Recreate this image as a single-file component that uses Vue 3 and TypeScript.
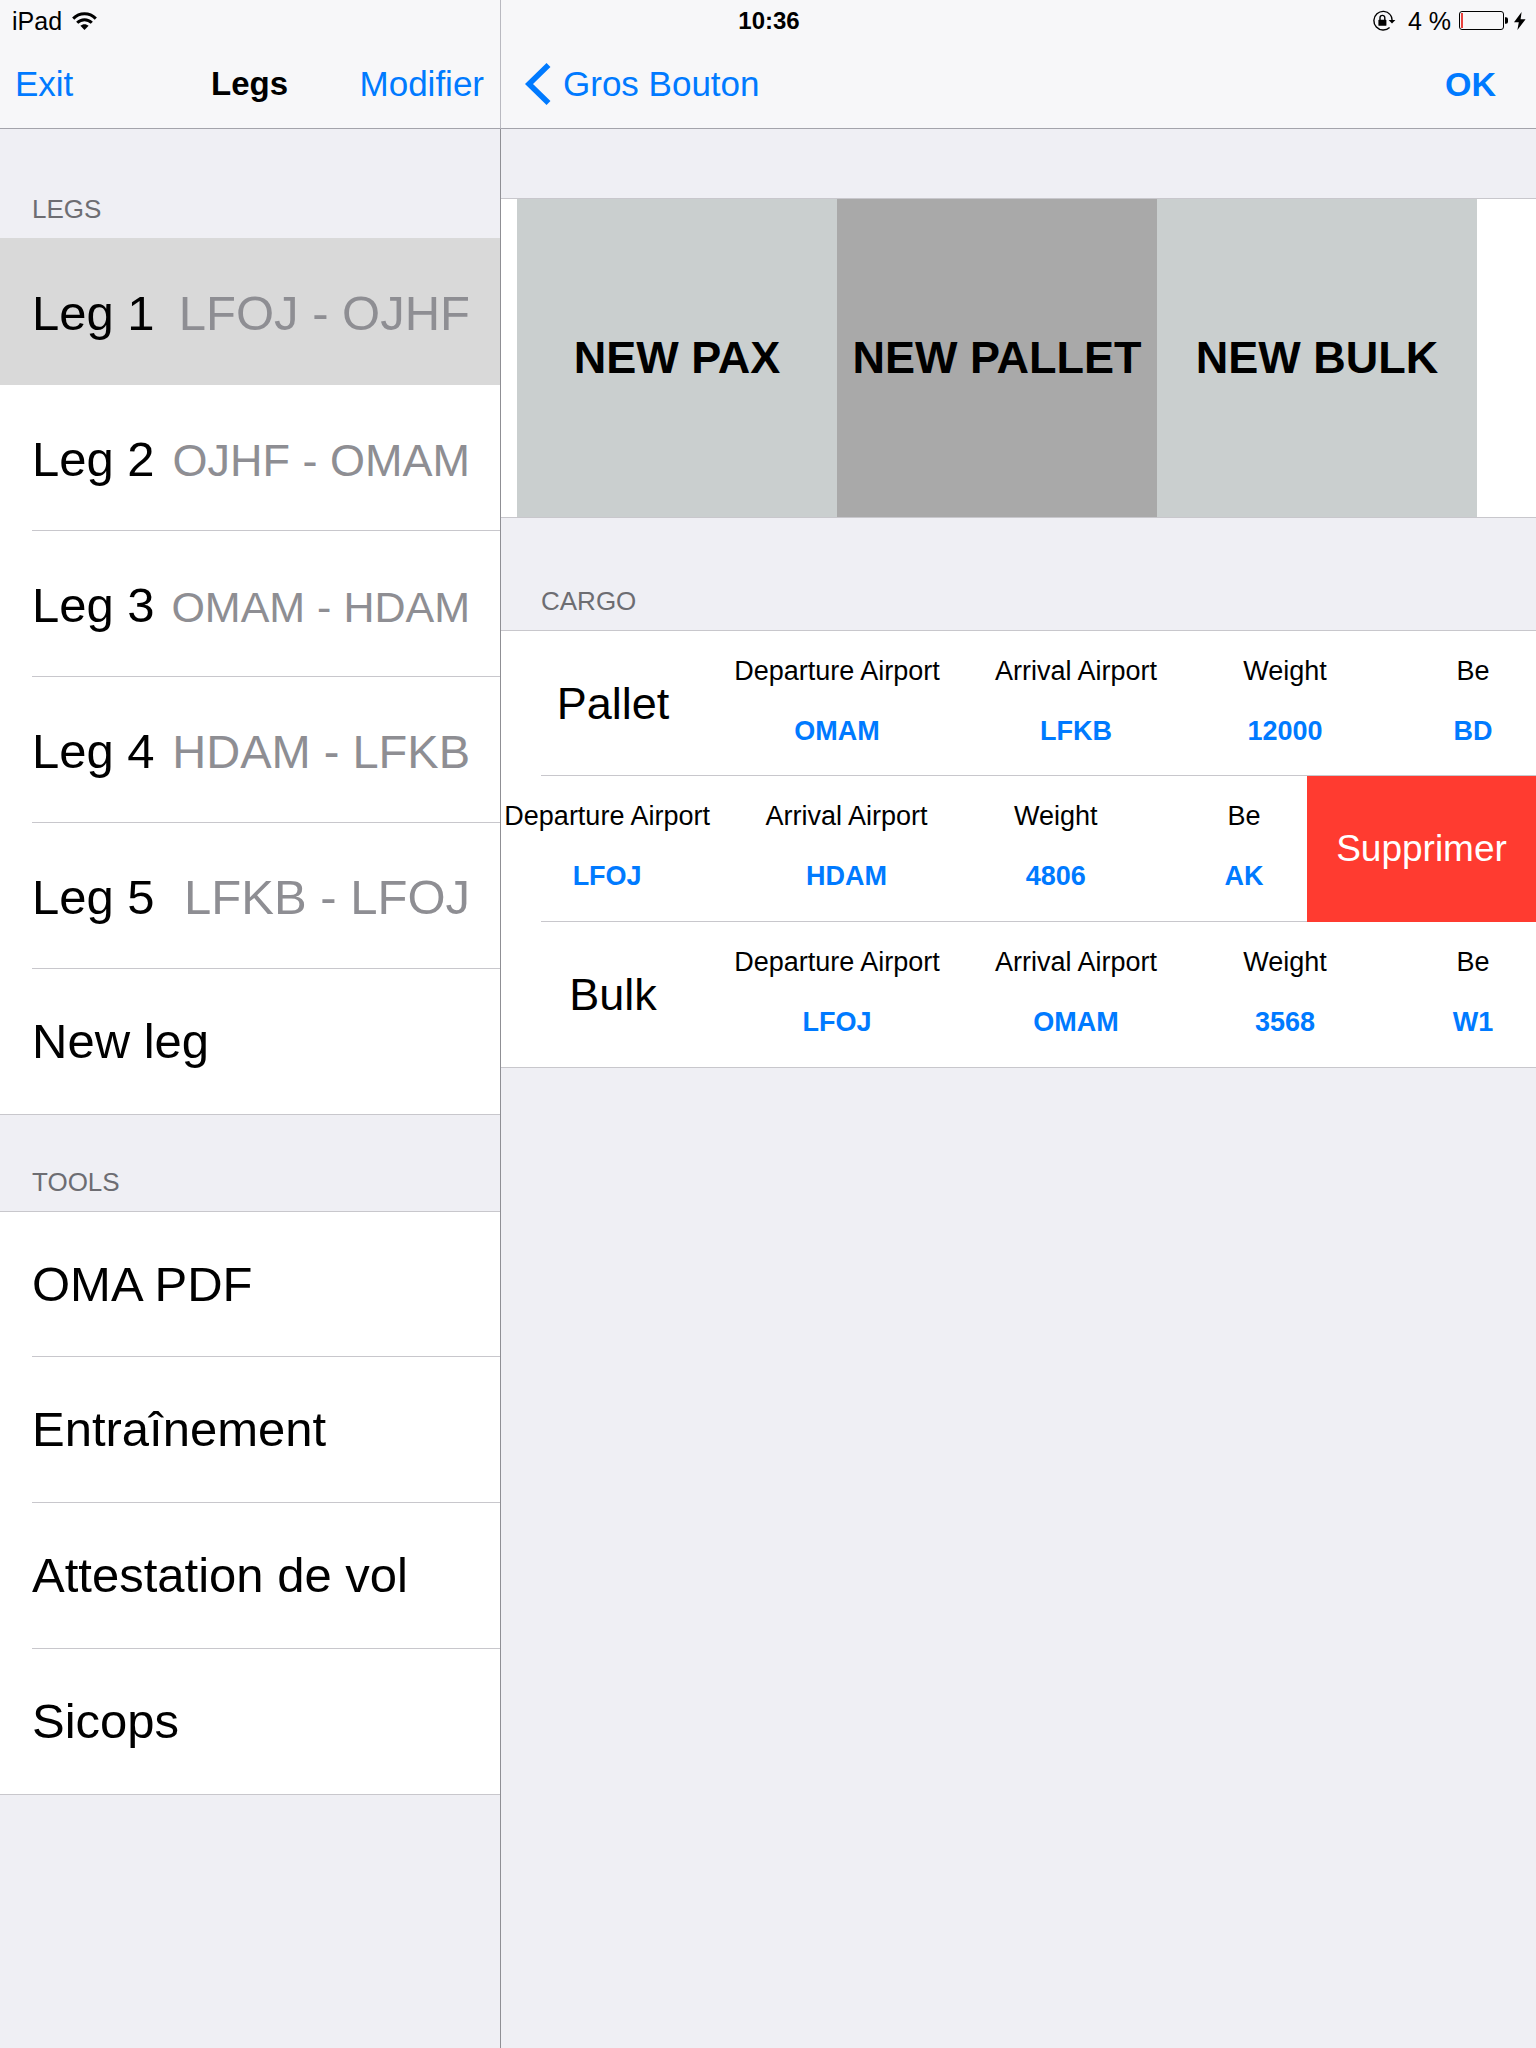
<script setup lang="ts">
import { ref } from 'vue'

interface Leg {
  name: string
  route: string
  size: number
}

interface CargoItem {
  kind: string
  fields: { label: string; value: string }[]
  swiped: boolean
}

const legs: Leg[] = [
  { name: 'Leg 1', route: 'LFOJ - OJHF', size: 49 },
  { name: 'Leg 2', route: 'OJHF - OMAM', size: 45 },
  { name: 'Leg 3', route: 'OMAM - HDAM', size: 43 },
  { name: 'Leg 4', route: 'HDAM - LFKB', size: 47 },
  { name: 'Leg 5', route: 'LFKB - LFOJ', size: 49 },
]

const tools: string[] = ['OMA PDF', 'Entraînement', 'Attestation de vol', 'Sicops']

const actions = ['NEW PAX', 'NEW PALLET', 'NEW BULK']

function cargoItem(kind: string, from: string, to: string, weight: string, be: string, swiped = false): CargoItem {
  return {
    kind,
    swiped,
    fields: [
      { label: 'Departure Airport', value: from },
      { label: 'Arrival Airport', value: to },
      { label: 'Weight', value: weight },
      { label: 'Be', value: be },
    ],
  }
}

const cargo = ref<CargoItem[]>([
  cargoItem('Pallet', 'OMAM', 'LFKB', '12000', 'BD'),
  cargoItem('Pallet', 'LFOJ', 'HDAM', '4806', 'AK', true),
  cargoItem('Bulk', 'LFOJ', 'OMAM', '3568', 'W1'),
])

const selectedLeg = ref(0)

function removeCargo(index: number): void {
  cargo.value.splice(index, 1)
}
</script>

<template>
  <div class="app">
    <div class="status">
      <div class="status-side">
        <span>iPad</span>
        <svg class="wifi" width="25" height="18" viewBox="0 0 25 18" aria-hidden="true">
          <g fill="none" stroke="#000" stroke-width="3">
            <path d="M1.2 6.6C7.6 0 17.4 0 23.8 6.6" />
            <path d="M5.2 10.8C9.3 6.7 15.7 6.7 19.8 10.8" />
          </g>
          <path d="M12.5 18L8.4 13.8C10.7 11.7 14.3 11.7 16.6 13.8Z" />
        </svg>
      </div>
      <strong class="clock">10:36</strong>
      <div class="status-side status-end">
        <svg class="lock" width="24" height="22" viewBox="0 0 24 22" aria-hidden="true">
          <path d="M18.2 4.6A9.3 9.3 0 1 0 17.6 17.4" fill="none" stroke="#000" stroke-width="1.4" />
          <path d="M18.2 4.6Q20.2 7 20.1 10.3" fill="none" stroke="#000" stroke-width="1.4" />
          <path d="M16.6 10H23.4L20 13.6Z" />
          <rect x="6.4" y="9.8" width="8" height="6" rx=".6" />
          <path d="M8 10V7.8a2.4 2.4 0 0 1 4.8 0V10" fill="none" stroke="#000" stroke-width="1.4" />
        </svg>
        <span>4 %</span>
        <svg class="battery" width="50" height="20" viewBox="0 0 50 20" aria-hidden="true">
          <rect x=".5" y=".5" width="44" height="18" rx="2.5" fill="none" stroke="#000" />
          <rect x="2" y="2" width="2" height="15" fill="#e8403c" />
          <path d="M46 6.2h1a2 2 0 0 1 2 2v2.6a2 2 0 0 1-2 2h-1z" />
        </svg>
        <svg class="bolt" width="12" height="18" viewBox="0 0 12 18" aria-hidden="true">
          <path d="M7.6 0L0 10.2H4.8L3.4 18L11.6 7.2H6.6Z" />
        </svg>
      </div>
    </div>

    <aside class="sidebar">
      <header class="navbar master-nav">
        <button type="button" class="nav-btn">Exit</button>
        <h1>Legs</h1>
        <button type="button" class="nav-btn nav-end">Modifier</button>
      </header>

      <div class="master-body">
        <section>
          <h2 class="section-title first">LEGS</h2>
          <ul class="rows" :class="{ 'top-selected': selectedLeg === 0 }">
            <li v-for="(leg, i) in legs" :key="leg.name" class="row" :class="{ selected: selectedLeg === i }">
              <button type="button" class="row-btn" @click="selectedLeg = i">
                <span>{{ leg.name }}</span>
                <span class="route" :style="{ fontSize: leg.size + 'px' }">{{ leg.route }}</span>
              </button>
            </li>
            <li class="row">
              <button type="button" class="row-btn single">New leg</button>
            </li>
          </ul>
        </section>

        <section>
          <h2 class="section-title">TOOLS</h2>
          <ul class="rows tight">
            <li v-for="tool in tools" :key="tool" class="row">
              <button type="button" class="row-btn single">{{ tool }}</button>
            </li>
          </ul>
        </section>
      </div>
    </aside>

    <main class="detail">
      <header class="navbar detail-nav">
        <button type="button" class="nav-btn back">
          <svg width="26" height="42" viewBox="0 0 26 42" aria-hidden="true">
            <path d="M23.5 2L4 21L23.5 40" fill="none" stroke="#007aff" stroke-width="5.6" />
          </svg>
          Gros Bouton
        </button>
        <button type="button" class="nav-btn ok">OK</button>
      </header>

      <div class="tiles">
        <button v-for="action in actions" :key="action" type="button" class="tile">{{ action }}</button>
      </div>

      <section>
        <h2 class="section-title cargo-title">CARGO</h2>
        <ul class="rows tight">
          <li v-for="(item, i) in cargo" :key="i" class="row cargo-row" :class="{ swiped: item.swiped }">
            <div class="cells">
              <h3 v-if="!item.swiped">{{ item.kind }}</h3>
              <dl v-for="field in item.fields" :key="field.label">
                <dt>{{ field.label }}</dt>
                <dd>{{ field.value }}</dd>
              </dl>
            </div>
            <button v-if="item.swiped" type="button" class="delete" @click="removeCargo(i)">Supprimer</button>
          </li>
        </ul>
      </section>
    </main>
  </div>
</template>

<style>
body {
  margin: 0;
  background: #efeff4;
}
</style>

<style scoped>
.app {
  display: grid;
  grid-template-columns: 501px minmax(0, 1fr);
  grid-template-rows: 42px auto;
  min-height: 100vh;
  background: #efeff4;
  color: #000;
  font-family: 'Liberation Sans', Arial, Helvetica, sans-serif;
}

h1,
h2,
h3,
ul,
dl,
dd {
  margin: 0;
  padding: 0;
}

ul {
  list-style: none;
}

button {
  margin: 0;
  padding: 0;
  border: 0;
  background: none;
  color: inherit;
  font: inherit;
  cursor: pointer;
}

svg {
  display: block;
  flex: none;
}

.status {
  grid-area: 1 / 1 / 2 / 3;
  z-index: 1;
  display: grid;
  grid-template-columns: 1fr auto 1fr;
  align-items: center;
  padding: 0 10px 0 12px;
  font-size: 25px;
  line-height: 42px;
}

.status-side {
  display: flex;
  align-items: center;
}

.status-end {
  justify-content: flex-end;
}

.wifi {
  margin-left: 10px;
}

.clock {
  font-size: 24px;
}

.lock {
  margin-right: 12px;
}

.battery {
  margin: 0 5px 0 8px;
}

.sidebar {
  grid-area: 1 / 1 / 3 / 2;
  display: flex;
  flex-direction: column;
}

.detail {
  grid-area: 1 / 2 / 3 / 3;
}

.navbar {
  box-sizing: border-box;
  height: 129px;
  padding-top: 40px;
  border-bottom: 1px solid #a3a3ab;
  background: #f7f7f9;
  align-items: center;
}

.master-nav {
  display: grid;
  grid-template-columns: 1fr auto 1fr;
  padding-left: 15px;
  padding-right: 16px;
  border-right: 1px solid #b9b9c0;
}

.master-body {
  flex: 1;
  border-right: 1px solid #8f8f94;
}

h1 {
  font-size: 33px;
  line-height: 40px;
}

.nav-btn {
  color: #007aff;
  font-size: 35px;
  line-height: 40px;
  text-align: left;
}

.nav-end {
  text-align: right;
}

.detail-nav {
  display: flex;
  justify-content: space-between;
  padding-left: 24px;
  padding-right: 40px;
}

.back {
  display: flex;
  align-items: center;
  gap: 12px;
}

.ok {
  font-size: 34px;
  font-weight: bold;
}

.section-title {
  padding: 53px 32px 14px;
  color: #6d6d72;
  font-size: 26px;
  font-weight: normal;
  line-height: 29px;
}

.section-title.first {
  padding-top: 66px;
}

.cargo-title {
  padding: 69px 40px 14px;
}

.rows {
  border-top: 1px solid #c8c7cc;
  background: #fff;
}

.rows.top-selected {
  border-top-color: #d9d9d9;
}

.row {
  position: relative;
  height: 146px;
}

.tight .row:first-child {
  height: 145px;
}

.row::after {
  content: '';
  position: absolute;
  left: 32px;
  right: 0;
  bottom: 0;
  height: 1px;
  background: #c8c7cc;
}

.row.selected {
  background: #d9d9d9;
}

.row.selected::after {
  display: none;
}

.row:last-child::after {
  left: 0;
}

.row-btn {
  display: flex;
  justify-content: space-between;
  align-items: baseline;
  box-sizing: border-box;
  width: 100%;
  height: 100%;
  padding: 2px 30px 0 32px;
  font-size: 49px;
  line-height: 144px;
  text-align: left;
  white-space: nowrap;
}

.row-btn.single {
  padding-top: 0;
}

.route {
  color: #8e8e93;
}

.tiles {
  display: flex;
  margin-top: 69px;
  padding-left: 16px;
  border-top: 1px solid #c8c7cc;
  border-bottom: 1px solid #c8c7cc;
  background: #fff;
}

.tile {
  flex: 0 1 320px;
  height: 318px;
  background: #cacfcf;
  font-size: 45px;
  font-weight: bold;
  white-space: nowrap;
}

.tile:nth-child(2) {
  background: #a9a9a9;
}

.cargo-row {
  display: flex;
  overflow: hidden;
}

.cargo-row::after {
  left: 40px;
}

.cells {
  flex: 1 1 0;
  min-width: 0;
  display: grid;
  grid-template-columns: 224fr 224fr 254fr 164fr 169fr;
  text-align: center;
  white-space: nowrap;
}

/* A swiped row slides its title out to make room for the delete button. */
.swiped .cells {
  grid-template-columns: 224fr 254fr 164fr 169fr;
  margin-left: -6px;
}

h3 {
  font-size: 45px;
  font-weight: normal;
  line-height: 145px;
}

dl {
  padding-top: 10px;
  font-size: 27px;
  line-height: 60px;
}

dl:last-child {
  padding-left: 43px;
}

dd {
  color: #007aff;
  font-weight: bold;
}

.delete {
  z-index: 1;
  flex: 0 0 229px;
  background: #ff3b30;
  color: #fff;
  font-size: 37px;
}
</style>
